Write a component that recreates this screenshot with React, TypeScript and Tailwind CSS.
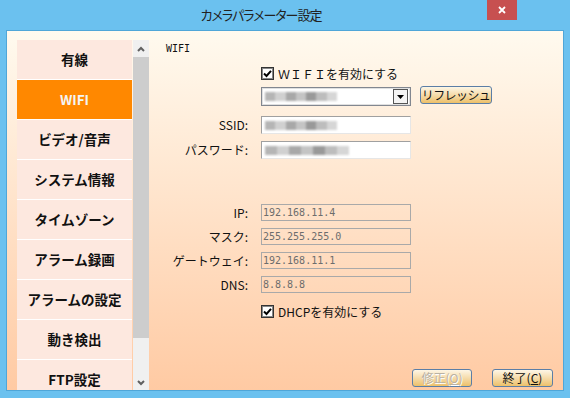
import React from "react"

const menu = ["有線", "WIFI", "ビデオ/音声", "システム情報", "タイムゾーン", "アラーム録画", "アラームの設定", "動き検出", "FTP設定"]

const Check = () => (
  <svg width="13" height="13" viewBox="0 0 13 13" className="shrink-0">
    <rect x="0.5" y="0.5" width="12" height="12" fill="#fff" stroke="#333" />
    <rect x="1.5" y="1.5" width="10" height="10" fill="none" stroke="#888" />
    <path d="M3 6.5 L5.5 9 L10 3.8" fill="none" stroke="#000" strokeWidth="2" />
  </svg>
)

// blurred placeholder standing in for a hidden value
const Blur = ({ w }: { w: number }) => (
  <div className="flex h-[9px] items-center gap-0 blur-[1px]" style={{ width: w }}>
    <div className="h-full flex-1 bg-[#b5b5b5]" />
    <div className="h-full flex-1 bg-[#d0d0d0]" />
    <div className="h-full flex-1 bg-[#a8a8a8]" />
    <div className="h-full flex-1 bg-[#c4c4c4]" />
    <div className="h-full flex-1 bg-[#999]" />
    <div className="h-full flex-1 bg-[#bdbdbd]" />
    <div className="h-full flex-1 bg-[#d6d6d6]" />
  </div>
)

const Row = ({ label, children, mt, h }: { label: string; children: React.ReactNode; mt: string; h: string }) => (
  <div className={`flex items-center ${mt} ${h}`}>
    <div className="w-[99px] text-right text-[12px] leading-none text-[#111]">{label}</div>
    <div className="ml-[13px] flex h-full items-center">{children}</div>
  </div>
)

const Live = ({ w }: { w: number }) => (
  <div className="flex h-[18px] w-[150px] items-center border border-t-[#a0a0a0] border-l-[#a0a0a0] border-r-[#e6e6e6] border-b-[#e6e6e6] bg-white pl-[3px]">
    <Blur w={w} />
  </div>
)

const Off = ({ value }: { value: string }) => (
  <div className="flex h-[17px] w-[150px] items-center border border-[#a9a9a9] pl-[1px] font-['DejaVu_Sans_Mono',monospace] text-[10px] leading-none text-[#6d6d6d]">
    {value}
  </div>
)

const Btn = ({ children, off, w }: { children: React.ReactNode; off?: boolean; w: string }) => (
  <div
    className={`flex h-[18px] ${w} items-center justify-center rounded-[3px] border border-[#5b7ea6] bg-linear-to-b from-[#fdf6e6] to-[#edc068] text-[12px] leading-none whitespace-nowrap ${off ? "text-[#b9b2a4] [text-shadow:1px_1px_0_#fff]" : "text-[#111]"}`}
  >
    {children}
  </div>
)

export default function App() {
  return (
    <div className="flex h-[398px] w-[570px] flex-col overflow-hidden bg-[#6bc1ef] font-['Noto_Sans_CJK_JP',sans-serif]">
      <div className="relative flex h-[30px] shrink-0 items-center justify-center pr-[48px]">
        <span className="text-[13px] tracking-[-1px] text-[#222] [font-feature-settings:'palt']">カメラパラメーター設定</span>
        <div className="absolute top-0 left-[487px] flex h-[20px] w-[30px] items-center justify-center bg-[#c75050]">
          <svg width="8" height="8" viewBox="0 0 8 8">
            <path d="M1 1 L7 7 M7 1 L1 7" stroke="#fff" strokeWidth="1.8" />
          </svg>
        </div>
      </div>

      <div className="mx-[6px] flex h-[361px] border border-[#4fa6d8] bg-linear-to-b from-[#fffaef] to-[#ffcaa3]">
        <div className="flex pt-[9px] pl-[10px]">
          <div className="flex h-[350px] w-[115px] flex-col overflow-hidden">
            {menu.map((m, i) => (
              <div
                key={m}
                className={`flex h-[40px] shrink-0 items-center justify-center border-b border-white text-[13.5px] font-bold ${i === 1 ? "bg-[#ff8800] text-[#f4f4f4]" : "bg-[#fde8df] text-[#111]"}`}
              >
                {m}
              </div>
            ))}
          </div>
          <div className="ml-[1px] flex h-[350px] w-[16px] flex-col bg-[#f0f0f0]">
            <div className="flex h-[17px] items-center justify-center">
              <svg width="8" height="6" viewBox="0 0 8 6">
                <path d="M1 5 L4 2 L7 5" fill="none" stroke="#606060" strokeWidth="2" />
              </svg>
            </div>
            <div className="h-[281px] bg-[#cdcdcd]" />
            <div className="flex flex-1 items-end justify-center pb-[4px]">
              <svg width="8" height="6" viewBox="0 0 8 6">
                <path d="M1 1 L4 4 L7 1" fill="none" stroke="#606060" strokeWidth="2" />
              </svg>
            </div>
          </div>
        </div>

        <div className="flex flex-1 flex-col">
          <div className="mt-[12px] ml-[17px] h-[12px] font-['DejaVu_Sans_Mono',monospace] text-[10px] leading-[12px] text-[#111]">WIFI</div>

          <div className="mt-[12px] ml-[112px] flex h-[13px] items-center gap-[4px]">
            <Check />
            <span className="text-[12px] leading-none text-[#111]">ＷＩＦＩを有効にする</span>
          </div>

          <div className="mt-[6px] ml-[112px] flex h-[20px] items-start gap-[9px]">
            <div className="mt-[1px] flex h-[19px] w-[150px] items-center border border-[#828790] bg-white pl-[3px] outline outline-1 -outline-offset-2 outline-[#e0e0e0]">
              <Blur w={72} />
              <div className="mr-[2px] ml-auto flex h-[15px] w-[15px] items-center justify-center border border-[#555] bg-[#f4f4f4]">
                <svg width="7" height="4" viewBox="0 0 7 4">
                  <path d="M0 0 H7 L3.5 4 Z" fill="#000" />
                </svg>
              </div>
            </div>
            <Btn w="w-[72px] tracking-[-0.6px]">リフレッシュ</Btn>
          </div>

          <Row label="SSID:" mt="mt-[10px]" h="h-[18px]">
            <Live w={72} />
          </Row>
          <Row label="パスワード:" mt="mt-[7px]" h="h-[18px]">
            <Live w={84} />
          </Row>

          <Row label="IP:" mt="mt-[45px]" h="h-[17px]">
            <Off value="192.168.11.4" />
          </Row>
          <Row label="マスク:" mt="mt-[7px]" h="h-[17px]">
            <Off value="255.255.255.0" />
          </Row>
          <Row label="ゲートウェイ:" mt="mt-[7px]" h="h-[17px]">
            <Off value="192.168.11.1" />
          </Row>
          <Row label="DNS:" mt="mt-[7px]" h="h-[17px]">
            <Off value="8.8.8.8" />
          </Row>

          <div className="mt-[12px] ml-[112px] flex h-[13px] items-center gap-[4px]">
            <Check />
            <span className="text-[12px] leading-none text-[#111]">DHCPを有効にする</span>
          </div>

          <div className="mt-[51px] ml-[263px] flex gap-[20px]">
            <Btn off w="w-[60px]">
              修正(<span className="underline">O</span>)
            </Btn>
            <Btn w="w-[61px]">
              終了(<span className="underline">C</span>)
            </Btn>
          </div>
        </div>
      </div>
    </div>
  )
}
